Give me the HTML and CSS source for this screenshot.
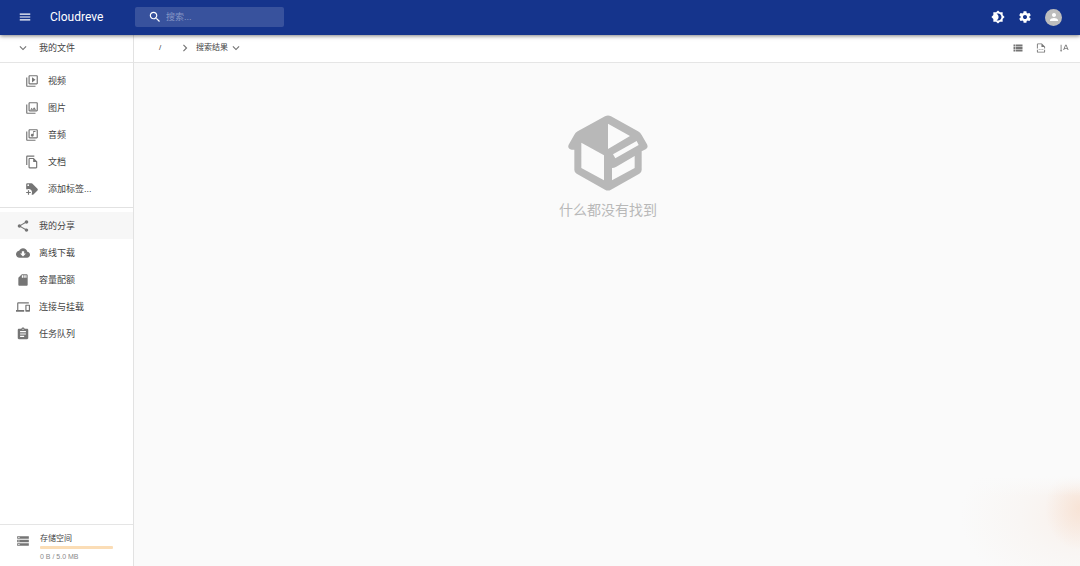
FILE: index.html
```html
<!DOCTYPE html>
<html lang="zh-CN">
<head>
<meta charset="utf-8">
<meta name="viewport" content="width=device-width, initial-scale=1">
<title>Cloudreve</title>
<link rel="stylesheet" href="styles.css">
</head>
<body>
<div class="app">
  <header class="topbar">
    <button class="icon-btn" type="button" aria-label="菜单"><svg class="icon" viewBox="0 0 24 24"><path d="M3 18h18v-2H3v2zm0-5h18v-2H3v2zm0-7v2h18V6H3z"/></svg></button>
    <a class="brand" href="#">Cloudreve</a>
    <label class="search">
      <svg class="icon" viewBox="0 0 24 24"><path d="M15.5 14h-.79l-.28-.27C15.41 12.59 16 11.11 16 9.5 16 5.91 13.09 3 9.5 3S3 5.91 3 9.5 5.91 16 9.5 16c1.61 0 3.09-.59 4.23-1.57l.27.28v.79l5 4.99L20.49 19l-4.99-5zm-6 0C7.01 14 5 11.99 5 9.5S7.01 5 9.5 5 14 7.01 14 9.5 11.99 14 9.5 14z"/></svg>
      <input type="text" placeholder="搜索..." aria-label="搜索">
    </label>
    <div class="top-actions">
      <button class="icon-btn" type="button" aria-label="切换主题"><svg class="icon" viewBox="0 0 24 24"><path d="M20 8.69V4h-4.69L12 .69 8.69 4H4v4.69L.69 12 4 15.31V20h4.69L12 23.31 15.31 20H20v-4.69L23.31 12 20 8.69zM12 18c-.89 0-1.74-.2-2.5-.55C11.56 16.5 13 14.42 13 12s-1.44-4.5-3.5-5.45C10.26 6.2 11.11 6 12 6c3.31 0 6 2.69 6 6s-2.69 6-6 6z"/></svg></button>
      <button class="icon-btn" type="button" aria-label="设置"><svg class="icon" viewBox="0 0 24 24"><path d="M19.43 12.98c.04-.32.07-.64.07-.98s-.03-.66-.07-.98l2.11-1.65c.19-.15.24-.42.12-.64l-2-3.46c-.12-.22-.39-.3-.61-.22l-2.49 1c-.52-.4-1.08-.73-1.69-.98l-.38-2.65C14.46 2.18 14.25 2 14 2h-4c-.25 0-.46.18-.49.42l-.38 2.65c-.61.25-1.17.59-1.69.98l-2.49-1c-.23-.09-.49 0-.61.22l-2 3.46c-.13.22-.07.49.12.64l2.11 1.65c-.04.32-.07.65-.07.98s.03.66.07.98l-2.11 1.65c-.19.15-.24.42-.12.64l2 3.46c.12.22.39.3.61.22l2.49-1c.52.4 1.08.73 1.69.98l.38 2.65c.03.24.24.42.49.42h4c.25 0 .46-.18.49-.42l.38-2.65c.61-.25 1.17-.59 1.69-.98l2.49 1c.23.09.49 0 .61-.22l2-3.46c.12-.22.07-.49-.12-.64l-2.11-1.65zM12 15.5c-1.93 0-3.5-1.57-3.5-3.5s1.57-3.5 3.5-3.5 3.5 1.57 3.5 3.5-1.57 3.5-3.5 3.5z"/></svg></button>
      <button class="icon-btn avatar" type="button" aria-label="账户"><svg class="icon" viewBox="0 0 24 24"><path d="M12 12c2.21 0 4-1.79 4-4s-1.79-4-4-4-4 1.79-4 4 1.79 4 4 4zm0 2c-2.67 0-8 1.34-8 4v2h16v-2c0-2.66-5.33-4-8-4z"/></svg></button>
    </div>
  </header>
  <div class="body">
    <aside class="sidebar">
      <button class="files-head" type="button"><svg class="icon" viewBox="0 0 24 24"><path d="M7.41 8.59 12 13.17l4.59-4.58L18 10l-6 6-6-6z"/></svg>我的文件</button>
      <nav class="nav nav-tags">
        <a class="row" href="#"><svg class="icon" viewBox="0 0 24 24"><path d="M4 6H2v14c0 1.1.9 2 2 2h14v-2H4V6zm16-4H8c-1.1 0-2 .9-2 2v12c0 1.1.9 2 2 2h12c1.1 0 2-.9 2-2V4c0-1.1-.9-2-2-2zm0 14H8V4h12v12zM12 5.5v9l6-4.5z"/></svg>视频</a>
        <a class="row" href="#"><svg class="icon" viewBox="0 0 24 24"><path d="M20 4v12H8V4h12m0-2H8c-1.1 0-2 .9-2 2v12c0 1.1.9 2 2 2h12c1.1 0 2-.9 2-2V4c0-1.1-.9-2-2-2zm-8.500 9.670 1.690 2.260 2.480-3.100L19 15H9zM2 6v14c0 1.100.9 2 2 2h14v-2H4V6H2z"/></svg>图片</a>
        <a class="row" href="#"><svg class="icon" viewBox="0 0 24 24"><path d="M20 2H8c-1.100 0-2 .9-2 2v12c0 1.100.9 2 2 2h12c1.100 0 2-.9 2-2V4c0-1.100-.9-2-2-2zm0 14H8V4h12v12zm-7.500-1c1.380 0 2.500-1.120 2.500-2.500V7h3V5h-4v5.510c-.42-.32-.93-.51-1.500-.51-1.380 0-2.500 1.120-2.500 2.500s1.120 2.500 2.500 2.500zM4 6H2v14c0 1.100.9 2 2 2h14v-2H4V6z"/></svg>音频</a>
        <a class="row" href="#"><svg class="icon" viewBox="0 0 24 24"><path d="M16 1H4c-1.100 0-2 .9-2 2v14h2V3h12V1zm-1 4H8c-1.100 0-1.990.9-1.990 2L6 21c0 1.100.89 2 1.990 2H19c1.100 0 2-.9 2-2V11l-6-6zM8 21V7h6v5h5v9H8z"/></svg>文档</a>
        <a class="row" href="#"><svg class="icon" viewBox="0 0 24 24"><path d="M21.410 11.580l-9-9A2 2 0 0 0 11 2H4a2 2 0 0 0-2 2v7c0 .53.21 1.040.59 1.410l.41.400A5.600 5.600 0 0 1 6 12a6 6 0 0 1 6 6c0 1.060-.28 2.090-.82 3l.4.400c.38.380.89.600 1.420.600s1.040-.21 1.410-.59l7-7c.38-.37.59-.88.59-1.410s-.21-1.040-.59-1.420zM5.500 7a1.500 1.500 0 1 1 0-3 1.500 1.500 0 0 1 0 3zM10 19H7v3H5v-3H2v-2h3v-3h2v3h3v2z"/></svg>添加标签...</a>
      </nav>
      <nav class="nav nav-main">
        <a class="row row-active" href="#"><svg class="icon" viewBox="0 0 24 24"><path d="M18 16.080c-.76 0-1.440.3-1.960.77L8.910 12.700c.05-.23.09-.46.09-.7s-.04-.47-.09-.7l7.050-4.110c.54.5 1.250.81 2.040.81 1.660 0 3-1.340 3-3s-1.340-3-3-3-3 1.340-3 3c0 .24.04.47.09.7L8.040 9.810C7.500 9.310 6.790 9 6 9c-1.660 0-3 1.340-3 3s1.340 3 3 3c.79 0 1.500-.31 2.040-.81l7.120 4.160c-.05.21-.08.43-.08.65 0 1.610 1.310 2.920 2.920 2.920s2.920-1.310 2.920-2.920-1.310-2.920-2.920-2.920z"/></svg>我的分享</a>
        <a class="row" href="#"><svg class="icon" viewBox="0 0 24 24"><path d="M19.350 10.040C18.670 6.590 15.640 4 12 4 9.110 4 6.600 5.640 5.350 8.040 2.340 8.360 0 10.910 0 14c0 3.310 2.690 6 6 6h13c2.760 0 5-2.240 5-5 0-2.640-2.050-4.780-4.650-4.960zM17 13l-5 5-5-5h3V9h4v4h3z"/></svg>离线下载</a>
        <a class="row" href="#"><svg class="icon" viewBox="0 0 24 24"><path d="M18 2h-8L4.020 8 4 20c0 1.100.9 2 2 2h12c1.100 0 2-.9 2-2V4c0-1.100-.9-2-2-2zm-6 6h-2V4h2v4zm3 0h-2V4h2v4zm3 0h-2V4h2v4z"/></svg>容量配额</a>
        <a class="row" href="#"><svg class="icon" viewBox="0 0 24 24"><path d="M4 6h18V4H4c-1.100 0-2 .9-2 2v11H0v3h14v-3H4V6zm19 2h-6c-.55 0-1 .45-1 1v10c0 .55.45 1 1 1h6c.55 0 1-.45 1-1V9c0-.55-.45-1-1-1zm-1 9h-4v-7h4v7z"/></svg>连接与挂载</a>
        <a class="row" href="#"><svg class="icon" viewBox="0 0 24 24"><path d="M19 3h-4.180C14.400 1.840 13.300 1 12 1s-2.400.84-2.820 2H5c-1.100 0-2 .9-2 2v14c0 1.100.9 2 2 2h14c1.100 0 2-.9 2-2V5c0-1.100-.9-2-2-2zm-7 0c.55 0 1 .45 1 1s-.45 1-1 1-1-.45-1-1 .45-1 1-1zm2 14H7v-2h7v2zm3-4H7v-2h10v2zm0-4H7V7h10v2z"/></svg>任务队列</a>
      </nav>
      <section class="storage">
        <svg class="icon" viewBox="0 0 24 24"><path d="M2 20h20v-4H2v4zm2-3h2v2H4v-2zM2 4v4h20V4H2zm4 3H4V5h2v2zm-4 7h20v-4H2v4zm2-3h2v2H4v-2z"/></svg>
        <div class="storage-info">
          <span class="storage-title">存储空间</span>
          <div class="meter" role="progressbar" aria-label="存储空间" aria-valuenow="0" aria-valuemin="0" aria-valuemax="100"></div>
          <span class="storage-text">0 B / 5.0 MB</span>
        </div>
      </section>
    </aside>
    <main class="content">
      <div class="pathbar">
        <a class="root" href="#">/</a>
        <svg class="icon" viewBox="0 0 24 24"><path d="M10 6 8.590 7.410 13.170 12l-4.580 4.590L10 18l6-6z"/></svg>
        <button class="crumb" type="button">搜索结果<svg class="icon" viewBox="0 0 24 24"><path d="M7.410 8.590 12 13.170l4.590-4.580L18 10l-6 6-6-6z"/></svg></button>
        <div class="view-actions">
          <button class="icon-btn" type="button" aria-label="列表视图"><svg class="icon icon-small" viewBox="2 2 20 20"><path d="M3 14h4v-4H3v4zm0 5h4v-4H3v4zM3 9h4V5H3v4zm5 5h13v-4H8v4zm0 5h13v-4H8v4zM8 5v4h13V5H8z"/></svg></button>
          <button class="icon-btn" type="button" aria-label="分页"><svg class="icon icon-small" viewBox="1 1 22 22"><path d="M3 13V4a2 2 0 0 1 2-2h9l7 7v4h-2v-3h-6V4H5v9zM3 16h2v4h14v-4h2v4a2 2 0 0 1-2 2H5a2 2 0 0 1-2-2zM7 14h2v2H7zm4 0h2v2h-2zm4 0h2v2h-2z"/></svg></button>
          <button class="icon-btn" type="button" aria-label="排序"><svg class="icon icon-small" viewBox="0 0 24 24"><path d="M4 4h2v14h2l-3 3-3-3h2zM10 17l5-13h3l5 13h-2.300l-1.200-3.300h-6L12.300 17zm4.200-5.300h4.600L16.500 5.600z"/></svg></button>
        </div>
      </div>
      <div class="empty">
        <svg class="empty-icon" viewBox="84 44 240 228"><path fill-rule="evenodd" d="M195 48Q204 43 213 48L294 93Q301 97 305 104L321 132Q326 142 317 147L305 153V209Q305 216 298 220L213 268Q204 273 195 268L110 220Q103 216 103 209V148H95Q81 145 86 133L103 103Q106 97 113 93ZM204 70V146L270 107ZM124 127V203L192 240V165ZM219 162 226 174 296 134 290 122ZM216 203V240L284 203V167L229 199Q222 203 216 203Z"/></svg>
        <p class="empty-text">什么都没有找到</p>
      </div>
    </main>
  </div>
</div>
</body>
</html>
```

FILE: styles.css
```css
* { box-sizing: border-box; }
body {
  margin: 0;
  background: #fafafa;
  color: #444;
  font: 9px/14px "Liberation Sans", "Noto Sans CJK SC", sans-serif;
}
a { color: inherit; text-decoration: none; }
button {
  margin: 0;
  padding: 0;
  border: 0;
  background: none;
  color: inherit;
  font: inherit;
  cursor: pointer;
}
.icon { display: block; width: 14px; height: 14px; flex: none; fill: currentColor; }
.icon-small { width: 10px; height: 10px; }
.icon-btn { display: flex; align-items: center; justify-content: center; }
.app { display: flex; flex-direction: column; min-height: 100vh; }

.topbar {
  position: relative;
  display: flex;
  align-items: center;
  height: 35px;
  padding: 0 18px;
  background: #15348c;
  color: #fff;
  box-shadow: 0 1px 4px rgba(0, 0, 0, .5);
}
.topbar > .icon-btn, .brand, .search, .top-actions { margin-bottom: 1px; }
.brand { width: 85px; margin-left: 18px; font: 400 12px/18px Roboto, sans-serif; }
.search {
  display: flex;
  align-items: center;
  gap: 4px;
  width: 149px;
  height: 20px;
  padding: 0 13px;
  border-radius: 2px;
  background: #38529d;
}
.search input {
  flex: 1;
  min-width: 0;
  padding: 0;
  border: 0;
  outline: 0;
  background: none;
  color: #fff;
  font: inherit;
}
.search input::placeholder { color: #8797c5; opacity: 1; }
.top-actions { display: flex; align-items: center; gap: 13px; margin-left: auto; }
.avatar { width: 17px; height: 17px; border-radius: 50%; background: #bdbdbd; }
.avatar .icon { width: 12px; height: 12px; }

.body { display: flex; flex: 1; }
.sidebar {
  display: flex;
  flex-direction: column;
  width: 134px;
  flex: none;
  border-right: 1px solid #e2e2e2;
  background: #fff;
}
.files-head {
  display: flex;
  align-items: center;
  gap: 9px;
  height: 28px;
  padding: 0 16px 1px;
  border-bottom: 1px solid #e5e5e5;
}
.sidebar .icon { color: #757575; }
.row { display: flex; align-items: center; gap: 9px; height: 27px; padding: 0 16px; }
.nav-tags { padding: 4px 0 5px; border-bottom: 1px solid #e2e2e2; }
.nav-tags .row { padding-left: 25px; }
.nav-main { padding: 4px 0; }
.row-active { background: #f7f7f7; }
.storage {
  display: flex;
  gap: 10px;
  margin-top: auto;
  padding: 9px 20px 4px 16px;
  border-top: 1px solid #e5e5e5;
  line-height: 10px;
}
.storage-info { display: flex; flex: 1; flex-direction: column; gap: 2px; }
.storage-title { font-size: 8px; }
.meter { height: 3px; border-radius: 1px; background: #fbddb6; }
.storage-text { padding-top: 1px; color: #8a8a8a; font-size: 7px; }

.content {
  display: flex;
  flex: 1;
  flex-direction: column;
  min-width: 0;
  background:
    linear-gradient(#fafafa, rgba(250, 250, 250, 0)) right bottom 70px / 130px 20px no-repeat,
    radial-gradient(ellipse 35px 42px at right 0 bottom 58px, rgba(247, 220, 202, .65), rgba(247, 220, 202, 0)) right bottom / 130px 90px no-repeat,
    radial-gradient(ellipse 120px 80px at right 0 bottom 50px, #f9f0eb, #f9f6f4 50%, #fafafa) right bottom / 130px 90px no-repeat,
    #fafafa;
}
.pathbar {
  display: flex;
  align-items: center;
  height: 28px;
  padding: 0 11px 1px 25px;
  border-bottom: 1px solid #e5e5e5;
  background: #fff;
  font-size: 8px;
}
.pathbar .icon { color: #757575; }
.root { width: 19px; }
.crumb { display: flex; align-items: center; gap: 1px; margin-left: 4px; }
.view-actions { display: flex; gap: 13px; margin-left: auto; }
.empty { display: flex; flex-direction: column; align-items: center; padding: 52px 0 0 2px; }
.empty-icon { width: 80px; height: 76px; fill: #b8b8b8; }
.empty-text { margin: 8px 0; color: #b8b8b8; font-size: 14px; line-height: 22px; }
```
